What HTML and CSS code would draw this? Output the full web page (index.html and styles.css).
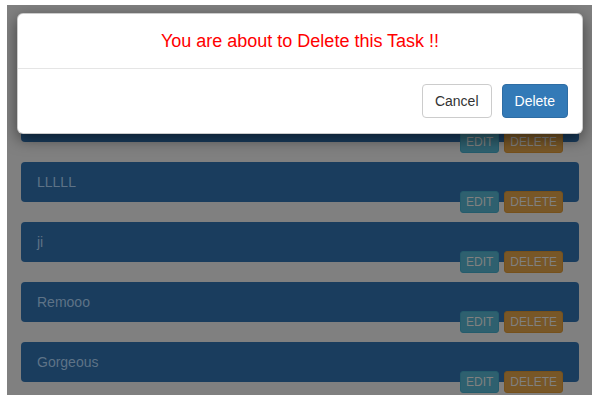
FILE: index.html
```html
<!DOCTYPE html>
<html lang="en">
<head>
  <meta charset="UTF-8" />
  <title>Tasks</title>
  <meta name="viewport" content="width=device-width, initial-scale=1.0" />
  <link rel="stylesheet" href="styles.css">
</head>
<body>
  <div class="stage">
    <ul class="task-list">
      <li class="task">
        <div class="task-card">Shopping</div>
        <div class="task-actions">
          <button class="btn-xs btn-edit">Edit</button>
          <button class="btn-xs btn-del">Delete</button>
        </div>
      </li>
      <li class="task">
        <div class="task-card">Homework</div>
        <div class="task-actions">
          <button class="btn-xs btn-edit">Edit</button>
          <button class="btn-xs btn-del">Delete</button>
        </div>
      </li>
      <li class="task">
        <div class="task-card">LLLLL</div>
        <div class="task-actions">
          <button class="btn-xs btn-edit">Edit</button>
          <button class="btn-xs btn-del">Delete</button>
        </div>
      </li>
      <li class="task">
        <div class="task-card">ji</div>
        <div class="task-actions">
          <button class="btn-xs btn-edit">Edit</button>
          <button class="btn-xs btn-del">Delete</button>
        </div>
      </li>
      <li class="task">
        <div class="task-card">Remooo</div>
        <div class="task-actions">
          <button class="btn-xs btn-edit">Edit</button>
          <button class="btn-xs btn-del">Delete</button>
        </div>
      </li>
      <li class="task">
        <div class="task-card">Gorgeous</div>
        <div class="task-actions">
          <button class="btn-xs btn-edit">Edit</button>
          <button class="btn-xs btn-del">Delete</button>
        </div>
      </li>
    </ul>

    <div class="modal">
      <div class="modal-header">
        <h4 class="modal-title">You are about to Delete this Task !!</h4>
      </div>
      <div class="modal-footer">
        <button class="btn btn-default">Cancel</button>
        <button class="btn btn-primary">Delete</button>
      </div>
    </div>
  </div>
</body>
</html>
```

FILE: styles.css
```css
body {
  margin: 0;
  padding: 5px 8px 5px 7px;
  background: #fff;
  font-family: "Liberation Sans", Arial, sans-serif;
  font-size: 14px;
}

.stage {
  position: relative;
  height: 390px;
  overflow: hidden;
  background: #808080;
  padding: 37px 13px 0 14px;
  box-sizing: border-box;
}

.task-list {
  list-style: none;
  margin: 0;
  padding: 0;
}

.task {
  margin-bottom: 9px;
}

.task-card {
  height: 40px;
  line-height: 40px;
  padding: 0 16px;
  background: #1a3d5e;
  color: #5e7387;
  border-radius: 4px;
}

.task-actions {
  display: flex;
  justify-content: flex-end;
  gap: 5px;
  margin-top: -11px;
  padding-right: 16px;
}

.btn-xs {
  font-family: inherit;
  font-size: 12px;
  line-height: 18px;
  padding: 1px 5px;
  border-radius: 3px;
  text-transform: uppercase;
  color: #808080;
  border: 1px solid transparent;
}

.btn-edit {
  background: #2e606f;
  border-color: #245c6c;
}

.btn-del {
  background: #785727;
  border-color: #76511c;
}

.modal {
  position: absolute;
  top: 8px;
  left: 10px;
  right: 9px;
  background: #fff;
  border: 1px solid rgba(0, 0, 0, .2);
  border-radius: 6px;
  box-shadow: 0 5px 15px rgba(0, 0, 0, .5);
}

.modal-header {
  padding: 15px;
  border-bottom: 1px solid #e5e5e5;
  text-align: center;
}

.modal-title {
  margin: 0;
  font-size: 18px;
  font-weight: normal;
  line-height: 24px;
  color: #ff0000;
}

.modal-footer {
  display: flex;
  justify-content: flex-end;
  gap: 10px;
  padding: 15px 14px 15px 15px;
}

.btn {
  font-family: inherit;
  font-size: 14px;
  line-height: 20px;
  padding: 6px 12px;
  border-radius: 4px;
  border: 1px solid transparent;
}

.btn-default {
  background: #fff;
  color: #333;
  border-color: #ccc;
}

.btn-primary {
  background: #337ab7;
  color: #fff;
  border-color: #2e6da4;
}
```
